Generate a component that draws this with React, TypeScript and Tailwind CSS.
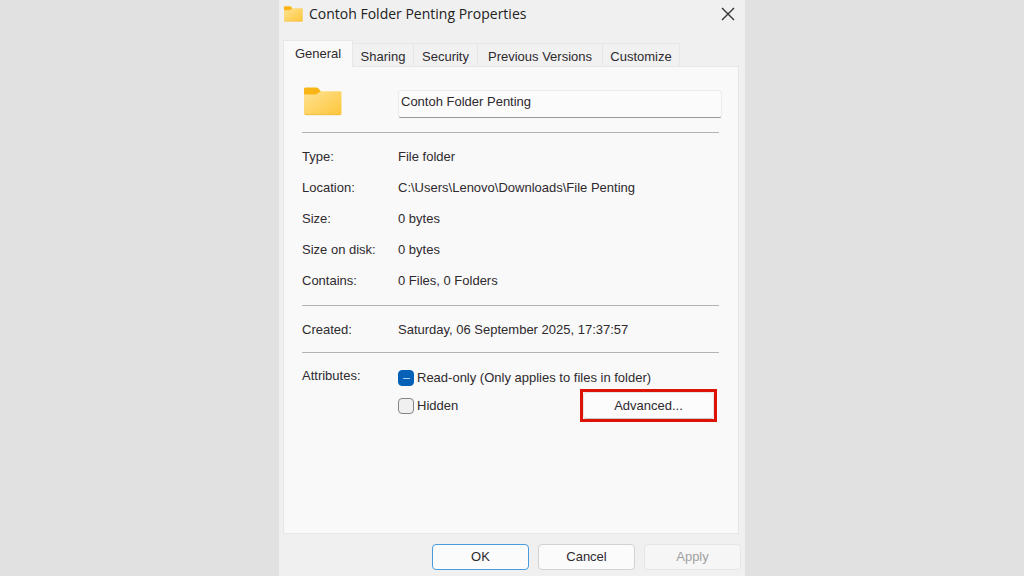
import { useEffect, useRef, useState } from "react";

const TABS = [
  { name: "General", width: "w-[70px]" },
  { name: "Sharing", width: "w-[61px]" },
  { name: "Security", width: "w-[64px]" },
  { name: "Previous Versions", width: "w-[125px]" },
  { name: "Customize", width: "w-[77px]" },
];

const DETAILS = [
  { label: "Type:", value: "File folder" },
  { label: "Location:", value: "C:\\Users\\Lenovo\\Downloads\\File Penting" },
  { label: "Size:", value: "0 bytes" },
  { label: "Size on disk:", value: "0 bytes" },
  { label: "Contains:", value: "0 Files, 0 Folders" },
];

const CREATED = [{ label: "Created:", value: "Saturday, 06 September 2025, 17:37:57" }];

export default function App() {
  const [tab, setTab] = useState("General");
  const [name, setName] = useState("Contoh Folder Penting");

  return (
    <main className="flex min-h-screen justify-center bg-[#e1e1e1] font-['Liberation_Sans',Arial,sans-serif] text-[13px] leading-4 text-[#2e2a2e]">
      <section
        role="dialog"
        aria-labelledby="title"
        className="flex w-full max-w-[466px] flex-col bg-[#f0f0f0] px-1 pb-[6px]"
      >
        <header className="flex h-7 items-center gap-[6px]">
          <FolderIcon className="h-4 w-5" />
          <h1 id="title" className="flex-1 font-['Open_Sans','Noto_Sans',sans-serif] text-[14px] text-[#222]">
            Contoh Folder Penting Properties
          </h1>
          <button aria-label="Close" className="mr-[2px] p-1">
            <svg viewBox="0 0 14 14" className="size-[14px]" fill="none" stroke="#333" strokeWidth="1.4">
              <path d="M1 1l12 12M13 1L1 13" />
            </svg>
          </button>
        </header>

        <div role="tablist" className="mt-3 flex items-end">
          {TABS.map((t) => (
            <button
              key={t.name}
              role="tab"
              aria-selected={tab === t.name}
              onClick={() => setTab(t.name)}
              className={`${t.width} whitespace-nowrap border-[#e7e7e7] ${
                tab === t.name
                  ? "z-10 -mb-px h-[27px] border-x border-t bg-[#f9f9f9]"
                  : "h-[23px] border-t border-r bg-[#f1f1f1] pt-[3px]"
              }`}
            >
              {t.name}
            </button>
          ))}
        </div>

        <div role="tabpanel" className="mr-[2px] flex-1 border border-[#e7e7e7] bg-[#f9f9f9] pt-5 pr-4 pl-[18px]">
          <div className="flex">
            <div className="w-24 shrink-0">
              <FolderIcon className="h-[29px] w-10" />
            </div>
            <input
              aria-label="Folder name"
              value={name}
              onChange={(e) => setName(e.target.value)}
              className="mt-[3px] h-7 min-w-0 flex-1 rounded-[3px] border border-[#ececec] border-b-[#999] bg-[#fbfbfb] px-[2px] pb-[5px] outline-none"
            />
          </div>
          <hr className="mt-[14px] mr-[3px] mb-2 border-[#b4b4b4]" />
          <Details items={DETAILS} />
          <hr className="mt-[9px] mr-[3px] mb-2 border-[#b4b4b4]" />
          <Details items={CREATED} />
          <hr className="mt-[7px] mr-[3px] mb-[15px] border-[#b4b4b4]" />

          <div className="flex">
            <span className="w-24 shrink-0">Attributes:</span>
            <div className="mr-[5px] flex-1 pt-[2px]">
              <Check label="Read-only (Only applies to files in folder)" mixed />
              <div className="mt-[3px] flex items-center justify-between">
                <Check label="Hidden" />
                <div className="border-3 border-[#dc1408]">
                  <button className="block h-[27px] w-[131px] rounded-[4px] border border-[#e4e4e4] border-b-[#c8c8c8] bg-[#fcfcfc]">
                    Advanced...
                  </button>
                </div>
              </div>
            </div>
          </div>
        </div>

        <footer className="mt-[10px] flex justify-end gap-[9px]">
          <button className="h-[26px] w-[97px] rounded-[4px] border border-[#489bdc] bg-[#fbfbfb]">OK</button>
          <button className="h-[26px] w-[97px] rounded-[4px] border border-[#d2d2d2] bg-[#fbfbfb]">Cancel</button>
          <button disabled className="h-[26px] w-[97px] rounded-[4px] border border-[#e6e6e6] bg-[#f6f6f6] text-[#a0a0a0]">
            Apply
          </button>
        </footer>
      </section>
    </main>
  );
}

function Details({ items }: { items: { label: string; value: string }[] }) {
  return (
    <dl>
      {items.map((d) => (
        <div key={d.label} className="flex h-[31px] items-center">
          <dt className="w-24 shrink-0">{d.label}</dt>
          <dd>{d.value}</dd>
        </div>
      ))}
    </dl>
  );
}

function Check({ label, mixed = false }: { label: string; mixed?: boolean }) {
  const ref = useRef<HTMLInputElement>(null);

  useEffect(() => {
    if (ref.current) ref.current.indeterminate = mixed;
  }, [mixed]);

  return (
    <label className="flex items-center gap-[3px] whitespace-nowrap">
      <input
        ref={ref}
        type="checkbox"
        className="grid size-4 appearance-none place-items-center rounded-[4px] border border-[#858585] bg-[#f0f0f0] checked:bg-[#0560b8] indeterminate:border-[#0560b8] indeterminate:bg-[#0560b8] indeterminate:before:h-px indeterminate:before:w-[7px] indeterminate:before:bg-[#a9cdf0]"
      />
      {label}
    </label>
  );
}

function FolderIcon({ className }: { className: string }) {
  return (
    <svg viewBox="0 0 40 29" className={className} preserveAspectRatio="none" aria-hidden="true">
      <defs>
        <linearGradient id="folder" x1="0" y1="0" x2="1" y2="1">
          <stop offset="0" stopColor="#ffe293" />
          <stop offset="1" stopColor="#fdc63a" />
        </linearGradient>
      </defs>
      <path d="M2 2Q2 .5 3.500 .5H14Q15.500 .5 16.500 1.500L19 4.500L15 9H2Z" fill="#f9b515" />
      <path d="M2 7.500H13Q14.500 7.500 15.500 6.500L17.500 5Q18.300 4.300 19.500 4.300H38Q39.500 4.300 39.500 5.800V26.500Q39.500 28 38 28H3.500Q2 28 2 26.500Z" fill="url(#folder)" />
      <path d="M3 27.700H38.500" stroke="#f0b63a" strokeWidth=".7" />
    </svg>
  );
}
